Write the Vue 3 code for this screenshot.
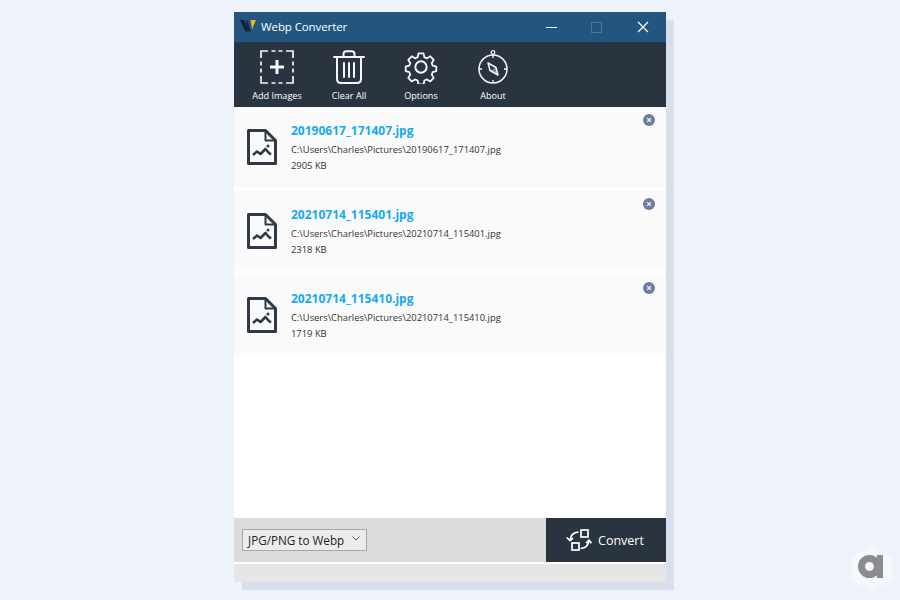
<script setup>
const files = [
  { name: '20190617_171407.jpg', size: '2905 KB' },
  { name: '20210714_115401.jpg', size: '2318 KB' },
  { name: '20210714_115410.jpg', size: '1719 KB' },
]
</script>

<template>
  <div class="page">
    <div class="window">
      <header class="titlebar">
        <svg class="logo" viewBox="0 0 16 13" width="16" height="13">
          <path d="M0 1h4.500L8 12.500H5.500z" fill="#0f2338" />
          <path d="M5 5.500L7.500 1 11 12.500H8.500z" fill="#12294a" />
          <path d="M10.500 1H16l-4 9.500z" fill="#f0b323" />
        </svg>
        <span class="title">Webp Converter</span>
        <div class="controls">
          <span class="ctl"><i class="min"></i></span>
          <span class="ctl"><i class="max"></i></span>
          <span class="ctl">
            <svg viewBox="0 0 12 12" width="12" height="12"><path d="M1 1l10 10M11 1L1 11" stroke="#fff" stroke-width="1.200" fill="none" /></svg>
          </span>
        </div>
      </header>

      <nav class="toolbar">
        <button class="tool">
          <svg viewBox="0 0 34 34" width="34" height="34" fill="none" stroke="#f4f6f8">
            <path d="M1 8V1h7M11.500 1h4M18.500 1h4M26 1h7v7M33 11.500v4M33 18.500v4M33 26v7h-7M22.500 33h-4M15.500 33h-4M8 33H1v-7M1 22.500v-4M1 15.500v-4" stroke-width="1.700" />
            <path d="M17 10v14M10 17h14" stroke-width="3" />
          </svg>
          <span>Add Images</span>
        </button>
        <button class="tool">
          <svg viewBox="0 0 34 34" width="34" height="34" fill="none" stroke="#f4f6f8" stroke-width="2" stroke-linecap="round" stroke-linejoin="round">
            <path d="M2 7h30" />
            <path d="M11.500 6.500V4c0-1.700 1-2.700 2.700-2.700h5.600c1.700 0 2.700 1 2.700 2.700v2.500" />
            <path d="M5 7.500v21.500c0 2.500 1.500 4 4 4h16c2.500 0 4-1.500 4-4V7.500" />
            <path d="M12 13v14M17 13v14M22 13v14" />
          </svg>
          <span>Clear All</span>
        </button>
        <button class="tool">
          <svg viewBox="0 0 36 36" width="34" height="34" fill="none" stroke="#f4f6f8" stroke-width="2.100" stroke-linejoin="round">
            <circle cx="18" cy="18" r="6" />
            <path d="M15 2h6l1 4.500 3 1.300 4-2.400 4 4.100-2.400 4 1.200 3 4.200 1v5.400l-4.200 1-1.200 3 2.400 4-4 4.100-4-2.400-3 1.300-1 4.500h-6l-1-4.500-3-1.300-4 2.400-4-4.100 2.400-4-1.200-3-4.200-1v-5.400l4.200-1 1.200-3-2.400-4 4-4.100 4 2.400 3-1.300z" transform="translate(1.800 1.800) scale(.9)" />
          </svg>
          <span>Options</span>
        </button>
        <button class="tool">
          <svg viewBox="0 0 34 34" width="34" height="34" fill="none" stroke="#f4f6f8" stroke-width="1.500" stroke-linejoin="round">
            <circle cx="17" cy="19" r="14" />
            <circle cx="17" cy="2.500" r="1.800" stroke-width="1.300" />
            <path d="M17 5v3M17 30v3M3 19h3M28 19h3" stroke-width="1.300" />
            <path d="M12 13l8 4.500 2 7.500-8-4.500z" />
            <path d="M14 20.500l6-3 2 7.500z" fill="#f4f6f8" fill-opacity=".45" stroke="none" />
          </svg>
          <span>About</span>
        </button>
      </nav>

      <main class="list">
        <article v-for="f in files" :key="f.name" class="item">
          <svg class="file" viewBox="0 0 30 36" width="30" height="36" fill="none" stroke="#2f3a46" stroke-linejoin="round">
            <path d="M1.500 1.500h17l10 10v23h-27z" stroke-width="3" />
            <path d="M18.500 2v9.500H28" stroke-width="2" />
            <path d="M6 26l4-3.500 3.500 2.500 5-5 3 3.500 2.500 2" stroke-width="2.600" />
            <circle cx="21" cy="17" r="1.500" fill="#2f3a46" stroke="none" />
          </svg>
          <div class="info">
            <div class="name">{{ f.name }}</div>
            <div class="path">C:\Users\Charles\Pictures\{{ f.name }}</div>
            <div class="size">{{ f.size }}</div>
          </div>
          <span class="remove">
            <svg viewBox="0 0 12 12" width="12" height="12">
              <circle cx="6" cy="6" r="6" fill="#6f7e9f" />
              <path d="M4.200 4.200l3.600 3.600M7.800 4.200L4.200 7.800" stroke="#fff" stroke-width="1.100" />
            </svg>
          </span>
        </article>
      </main>

      <footer class="actions">
        <div class="format">
          <div class="select">
            <span>JPG/PNG to Webp</span>
            <svg viewBox="0 0 8 5" width="8" height="5"><path d="M.5.500L4 4 7.500.500" fill="none" stroke="#555" /></svg>
          </div>
        </div>
        <button class="convert">
          <svg viewBox="0 0 26 22" width="26" height="22" fill="none" stroke="#fff" stroke-width="1.700">
            <rect x="15" y="1" width="7" height="7" />
            <rect x="6" y="14" width="7" height="7" />
            <path d="M12.500 3C7.500 3.500 4.500 6 4 11" />
            <path d="M.8 8.500L4 11.500l3-2.500" />
            <path d="M14.500 19.500c5-.5 8-3 8.500-8" />
            <path d="M20 14l3-2.800 2.500 3" />
          </svg>
          <span>Convert</span>
        </button>
      </footer>
      <div class="status"></div>
    </div>

    <svg class="watermark" viewBox="0 0 40 47" width="40" height="47">
      <path d="M20 0l20 11.500v24L20 47 0 35.500v-24z" fill="#f6f7fc" />
      <circle cx="17.500" cy="21.500" r="8" fill="none" stroke="#8b8c8f" stroke-width="7" />
      <path d="M25 10h6v23h-6z" fill="#8b8c8f" />
    </svg>
  </div>
</template>

<style scoped>
.page {
  position: relative;
  width: 900px;
  height: 600px;
  overflow: hidden;
  background: #eef2fb;
  display: flex;
  justify-content: center;
  padding-top: 12px;
  box-sizing: border-box;
  font-family: "Open Sans", "Noto Sans", sans-serif;
}
.window {
  width: 432px;
  height: 570px;
  display: flex;
  flex-direction: column;
  background: #fff;
  box-shadow: 8px 8px 0 #d8deeb;
}
.titlebar {
  height: 30px;
  flex: none;
  display: flex;
  align-items: center;
  background: #22567f;
  color: #fff;
  padding-left: 6px;
}
.logo { margin-right: 5px; margin-top: -4px; }
.title { font-size: 11.500px; letter-spacing: -0.1px; margin-top: -1px; }
.controls { margin-left: auto; display: flex; }
.ctl {
  width: 46px;
  height: 30px;
  display: flex;
  align-items: center;
  justify-content: center;
}
.min { display: block; width: 11px; height: 1px; background: #fff; }
.max { display: block; width: 9px; height: 9px; border: 1px solid #4a7a9f; margin-right: 1px; }
.toolbar {
  height: 65px;
  flex: none;
  display: flex;
  align-items: flex-start;
  background: #2a3440;
  padding-left: 7px;
}
.tool {
  width: 72px;
  padding: 8px 0 0;
  background: none;
  border: 0;
  color: #fff;
  font: inherit;
  font-size: 9.100px;
  display: flex;
  flex-direction: column;
  align-items: center;
  gap: 6px;
}
.tool span { line-height: 12px; }
.list {
  flex: 1;
  background: #fff;
  display: flex;
  flex-direction: column;
  gap: 4px;
}
.item {
  position: relative;
  height: 80px;
  background: #fafafa;
  display: flex;
  align-items: flex-start;
  padding: 22px 0 0 13px;
  box-sizing: border-box;
}
.file { flex: none; }
.info { margin-left: 14px; margin-top: -7px; }
.name {
  color: #18a9ef;
  font-size: 12px;
  font-weight: 700;
  line-height: 17px;
}
.path {
  color: #333;
  font-size: 9.400px;
  line-height: 12px;
  margin-top: 5px;
}
.size {
  color: #333;
  font-size: 9.400px;
  line-height: 12px;
  margin-top: 4px;
}
.remove {
  position: absolute;
  top: 7px;
  right: 11px;
  width: 12px;
  height: 12px;
  display: flex;
}
.actions {
  height: 44px;
  flex: none;
  display: flex;
  background: #dcdcdc;
}
.format {
  flex: 1;
  display: flex;
  align-items: center;
  padding-left: 8px;
}
.select {
  width: 125px;
  height: 22px;
  box-sizing: border-box;
  border: 1px solid #a8a8a8;
  background: #ececec;
  color: #222;
  font-size: 11.700px;
  display: flex;
  align-items: center;
  justify-content: space-between;
  padding: 0 6px 0 5px;
}
.select svg { margin-top: -3px; }
.convert {
  width: 120px;
  border: 0;
  background: #2a3440;
  color: #fff;
  font: inherit;
  font-size: 12.500px;
  display: flex;
  align-items: center;
  justify-content: center;
  gap: 6px;
  padding: 0 2px 0 0;
}
.status {
  height: 18px;
  flex: none;
  margin-top: 2px;
  background: #e6e6e6;
}
.watermark {
  position: absolute;
  left: 852px;
  top: 545px;
}
</style>
